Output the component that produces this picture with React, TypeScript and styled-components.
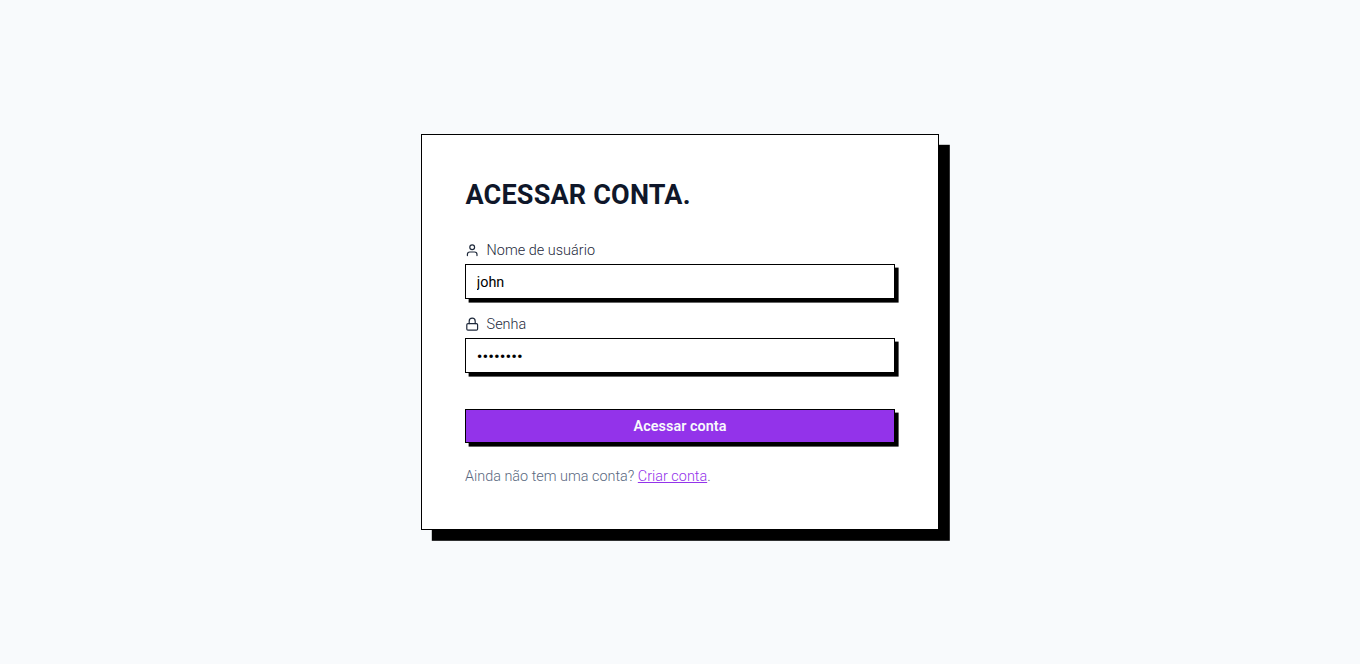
import React from "react";
import styled, { createGlobalStyle } from "styled-components";
import { Lock } from "lucide-react";

const GlobalStyle = createGlobalStyle`
  *, *::before, *::after { box-sizing: border-box; }
  html { font-size: 14.4px; }
  body {
    margin: 0;
    background: #f8fafc;
    color: #0f172a;
    font-family: Roboto, "Liberation Sans", sans-serif;
    font-size: 1rem;
    line-height: 1.5;
  }
`;

const Page = styled.main`
  min-height: 100vh;
  display: flex;
  align-items: center;
  justify-content: center;
`;

const Card = styled.section`
  width: 36rem;
  padding: 3rem;
  background: #fff;
  border: 1px solid #000;
  box-shadow: 0.75rem 0.75rem 0 #000;
`;

const Title = styled.h1`
  height: 2.25rem;
  margin: 0 0 2rem;
  padding: 1px 0 0 0.5px;
  font-size: 1.875rem;
  line-height: 2.25rem;
  font-weight: 700;
  letter-spacing: 0.2px;
  text-transform: uppercase;
  white-space: nowrap;
`;

const Form = styled.form`
  display: flex;
  flex-direction: column;
`;

const Field = styled.div`
  display: flex;
  flex-direction: column;
  gap: 0.25rem;

  & + & { margin-top: 1rem; }
`;

const Label = styled.label`
  display: flex;
  align-items: center;
  gap: 0.5rem;
  height: 1.5rem;
  font-weight: 300;
  letter-spacing: 0.04px;
  color: #1e293b;

  span { padding-top: 2px; }
`;

const Input = styled.input`
  width: 100%;
  height: 34.4px;
  padding: calc(0.375rem + 1px) 0.75rem calc(0.375rem - 1px);
  border: 1px solid #000;
  border-radius: 0;
  outline: none;
  background: #fff;
  color: #000;
  font: inherit;
  box-shadow: 0.25rem 0.25rem 0 #000;

  &[type="password"] {
    font-size: 17px;
    line-height: 1.5rem;
  }
`;

const Button = styled.button`
  height: 34.4px;
  margin: 2.5rem 0 1.5rem;
  padding: 2px 0 0;
  border: 1px solid #000;
  border-radius: 0;
  background: #9333ea;
  color: #f8fafc;
  font: inherit;
  font-weight: 600;
  letter-spacing: 0.04px;
  box-shadow: 0.25rem 0.25rem 0 #000;
  cursor: pointer;
`;

const Footer = styled.p`
  height: 1.5rem;
  margin: 0;
  padding-top: 1px;
  font-weight: 300;
  letter-spacing: 0.01px;
  color: #596880;
`;

const Link = styled.a`
  color: #9333ea;
  text-decoration: underline;
`;

function UserIcon() {
  return (
    <svg
      width="14.4"
      height="14.4"
      viewBox="0 0 24 24"
      fill="none"
      stroke="currentColor"
      strokeWidth="2"
      strokeLinecap="round"
      strokeLinejoin="round"
    >
      <path d="M20 21v-2a4 4 0 0 0-4-4H8a4 4 0 0 0-4 4v2" />
      <circle cx="12" cy="7" r="4" />
    </svg>
  );
}

export default function App() {
  return (
    <>
      <GlobalStyle />
      <Page>
        <Card>
          <Title>Acessar conta.</Title>
          <Form onSubmit={(e) => e.preventDefault()}>
            <Field>
              <Label htmlFor="username">
                <UserIcon />
                <span>Nome de usuário</span>
              </Label>
              <Input id="username" defaultValue="john" />
            </Field>
            <Field>
              <Label htmlFor="password">
                <Lock size={14.4} />
                <span>Senha</span>
              </Label>
              <Input id="password" type="password" defaultValue="password" />
            </Field>
            <Button type="submit">Acessar conta</Button>
          </Form>
          <Footer>
            Ainda não tem uma conta? <Link href="#">Criar conta</Link>.
          </Footer>
        </Card>
      </Page>
    </>
  );
}
